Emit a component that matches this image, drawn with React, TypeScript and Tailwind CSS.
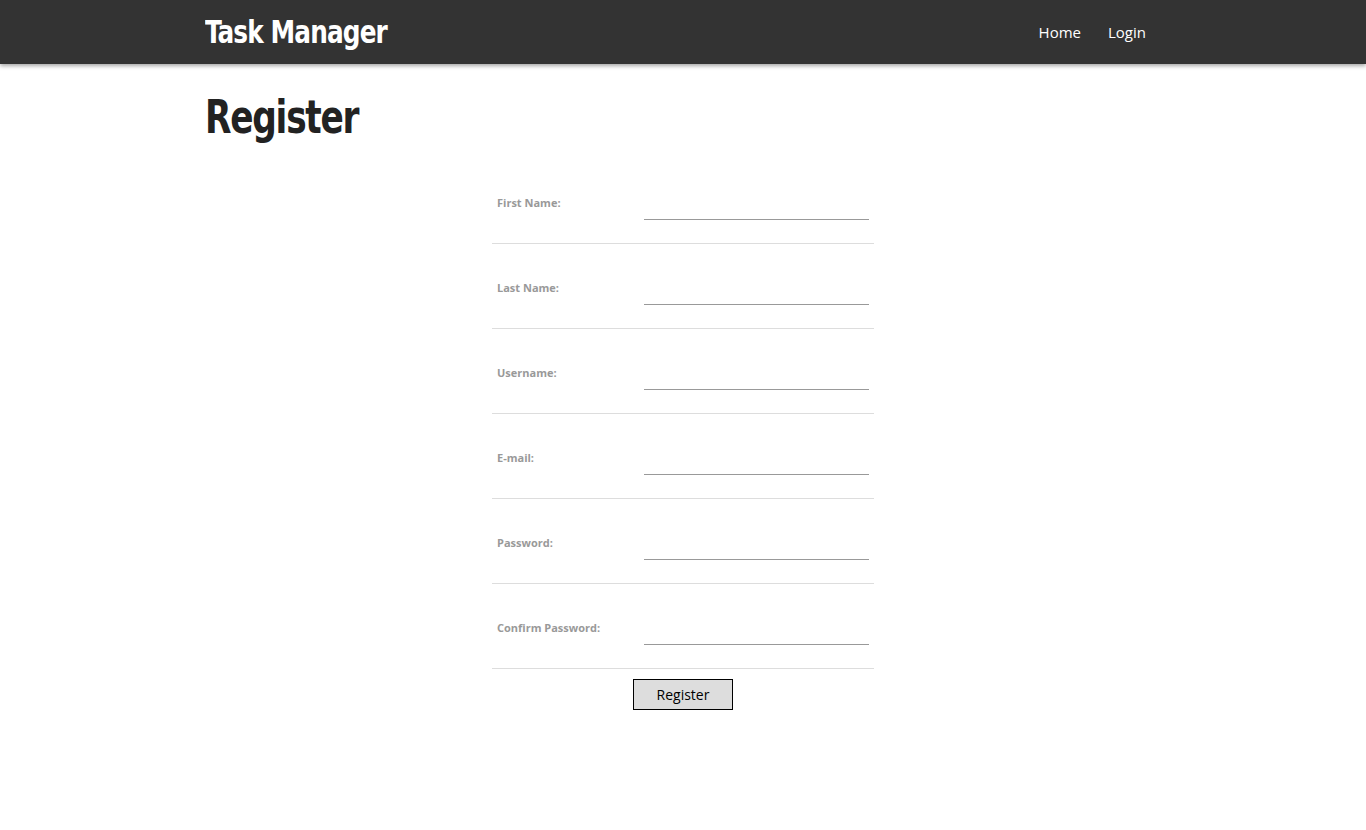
import React from "react";

const fields = [
  "First Name:",
  "Last Name:",
  "Username:",
  "E-mail:",
  "Password:",
  "Confirm Password:",
];

const ui = '"Open Sans", "Noto Sans", "Liberation Sans", sans-serif';
const head = '"DejaVu Sans Condensed", "DejaVu Sans", "Liberation Sans", sans-serif';

export default function App() {
  return (
    <div className="min-h-[830px] bg-white" style={{ fontFamily: ui }}>
      {/* nav */}
      <header className="h-16 bg-[#333333] shadow-[0_2px_4px_rgba(0,0,0,0.35)]">
        <div className="mx-auto flex h-full w-[960px] items-center justify-between pl-[2px] pr-[17px]">
          <div
            className="inline-block origin-left scale-x-[0.86] font-stretch-condensed text-[32px] font-bold tracking-[-1px] text-white"
            style={{ fontFamily: head }}
          >
            Task Manager
          </div>
          <nav className="flex gap-[27px] text-[15px] text-white">
            <a>Home</a>
            <a>Login</a>
          </nav>
        </div>
      </header>

      <main className="mx-auto w-[960px]">
        <h1
          className="mt-[24px] pl-[2px] font-stretch-condensed text-[46px] font-bold leading-[58px] tracking-[-1.5px] text-[#222222]"
          style={{ fontFamily: head }}
        >
          <span className="inline-block origin-left scale-x-[0.83]">Register</span>
        </h1>

        <form className="mx-auto mt-[13px] w-[382px]">
          {fields.map((f) => (
            <div
              key={f}
              className="flex h-[85px] items-start border-b border-[#dddddd] px-[5px]"
            >
              <label className="mt-[36px] w-[147px] text-[11px] font-bold text-[#999999]">
                {f}
              </label>
              <input
                type={f.startsWith("Password") || f.startsWith("Confirm") ? "password" : "text"}
                className="mt-[34px] h-[27px] w-[225px] border-b border-[#999999] outline-none"
              />
            </div>
          ))}
          <div className="flex justify-center pt-[10px]">
            <button
              type="button"
              className="h-[31px] w-[100px] border border-black bg-[#dddddd] text-[14px] text-black"
            >
              Register
            </button>
          </div>
        </form>
      </main>
    </div>
  );
}
